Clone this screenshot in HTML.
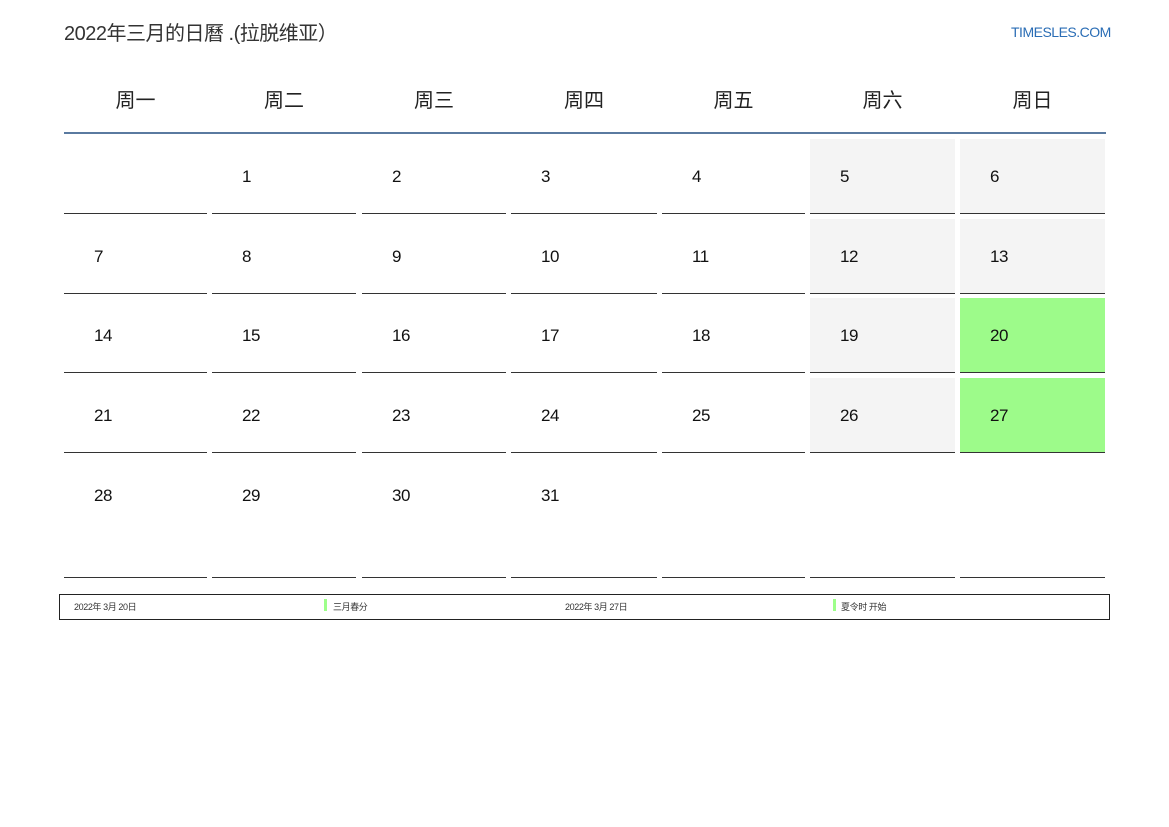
<!DOCTYPE html>
<html><head><meta charset="utf-8"><style>
body{margin:0;width:1169px;height:827px;background:#fff;position:relative;font-family:"Liberation Sans","Noto Sans CJK SC",sans-serif;color:#222;overflow:hidden}
.a{position:absolute}
.h{position:absolute;top:84px;font-size:20px;text-align:center;width:145px;color:#222}
.c{position:absolute;border-bottom:1px solid #333;box-sizing:border-box}
.n{position:absolute;font-size:17px;color:#111;letter-spacing:-0.5px}
</style></head><body>
<div class="a" style="left:64px;top:17px;font-size:20px;color:#333;letter-spacing:-0.5px">2022年三月的日曆 .(拉脱维亚）</div>
<div class="a" style="left:1011px;top:24px;font-size:14px;color:#2a6db5;letter-spacing:-0.5px">TIMESLES.COM</div>
<div id="g"></div>
<div class="a" style="left:64px;top:132px;width:1042px;height:2px;background:#5a7aa0"></div>
<div class="a" style="left:59px;top:594px;width:1049px;height:24px;border:1px solid #222;font-size:9px;color:#333;letter-spacing:-0.4px">
<span class="a" style="left:14px;top:5px">2022年 3月 20日</span>
<span class="a" style="left:264px;top:4px;width:3px;height:12px;background:#9dff8a"></span>
<span class="a" style="left:273px;top:5px">三月春分</span>
<span class="a" style="left:505px;top:5px">2022年 3月 27日</span>
<span class="a" style="left:773px;top:4px;width:3px;height:12px;background:#9dff8a"></span>
<span class="a" style="left:781px;top:5px">夏令时 开始</span>
</div>
<script>
var xs=[[64,207],[212,356],[362,506],[511,657],[662,805],[810,955],[960,1105]];
var ys=[[139,214],[219,294],[298,373],[378,453],[458,578]];
var hd=["周一","周二","周三","周四","周五","周六","周日"];
var s="";
for(var i=0;i<7;i++)s+='<div class="h" style="left:'+(xs[i][0])+'px;width:'+(xs[i][1]-xs[i][0])+'px">'+hd[i]+'</div>';
for(var r=0;r<5;r++)for(var c=0;c<7;c++){var d=r*7+c;var bg="#fff";
if(c>=5&&r<4)bg="#f4f4f4";if((d==20||d==27))bg="#9dfb8a";
s+='<div class="c" style="left:'+xs[c][0]+'px;top:'+ys[r][0]+'px;width:'+(xs[c][1]-xs[c][0])+'px;height:'+(ys[r][1]-ys[r][0])+'px;background:'+bg+'"></div>';
if(d>=1&&d<=31)s+='<div class="n" style="left:'+(xs[c][0]+30)+'px;top:'+(ys[r][0]+28)+'px">'+d+'</div>';}
document.getElementById("g").innerHTML=s;
</script>
</body></html>
